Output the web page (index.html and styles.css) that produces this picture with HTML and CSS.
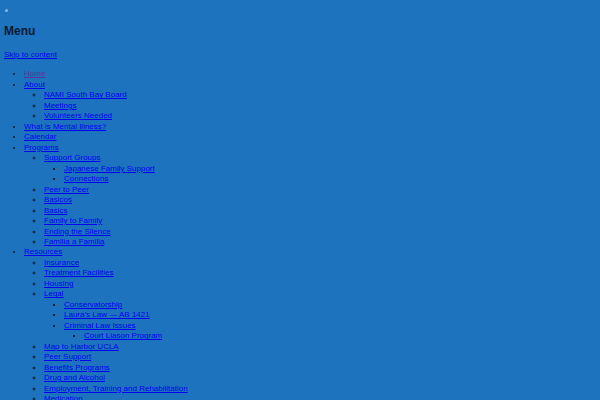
FILE: index.html
```html
<!DOCTYPE html>
<html>
<head>
<meta charset="utf-8">
<link rel="stylesheet" href="styles.css">
</head>
<body>
<div class="top"><span class="dot"></span></div>
<h2 class="menu-title">Menu</h2>
<a class="skip" href="#content">Skip to content</a>
<ul class="nav">
  <li><a class="visited" href="#">Home</a></li>
  <li><a href="#">About</a>
    <ul>
      <li><a href="#">NAMI South Bay Board</a></li>
      <li><a href="#">Meetings</a></li>
      <li><a href="#">Volunteers Needed</a></li>
    </ul>
  </li>
  <li><a href="#">What is Mental Illness?</a></li>
  <li><a href="#">Calendar</a></li>
  <li><a href="#">Programs</a>
    <ul>
      <li><a href="#">Support Groups</a>
        <ul>
          <li><a href="#">Japanese Family Support</a></li>
          <li><a href="#">Connections</a></li>
        </ul>
      </li>
      <li><a href="#">Peer to Peer</a></li>
      <li><a href="#">Basicos</a></li>
      <li><a href="#">Basics</a></li>
      <li><a href="#">Family to Family</a></li>
      <li><a href="#">Ending the Silence</a></li>
      <li><a href="#">Familia a Familia</a></li>
    </ul>
  </li>
  <li><a href="#">Resources</a>
    <ul>
      <li><a href="#">Insurance</a></li>
      <li><a href="#">Treatment Facilities</a></li>
      <li><a href="#">Housing</a></li>
      <li><a href="#">Legal</a>
        <ul>
          <li><a href="#">Conservatorship</a></li>
          <li><a href="#">Laura’s Law — AB 1421</a></li>
          <li><a href="#">Criminal Law Issues</a>
            <ul>
              <li><a href="#">Court Liason Program</a></li>
            </ul>
          </li>
        </ul>
      </li>
      <li><a href="#">Map to Harbor UCLA</a></li>
      <li><a href="#">Peer Support</a></li>
      <li><a href="#">Benefits Programs</a></li>
      <li><a href="#">Drug and Alcohol</a></li>
      <li><a href="#">Employment, Training and Rehabilitation</a></li>
      <li><a href="#">Medication</a></li>
      <li><a href="#">Links</a></li>
    </ul>
  </li>
</ul>
</body>
</html>
```
FILE: styles.css
```css
html, body {
  margin: 0;
  background: #1e73be;
}
body {
  padding: 4px;
  font-family: "Liberation Sans", Arial, sans-serif;
  font-size: 8px;
  line-height: 10.47px;
  color: #0a1a33;
}
.top {
  height: 12px;
  padding-top: 5px;
}
.dot {
  display: block;
  width: 3px;
  height: 3px;
  border-radius: 50%;
  background: #8fb6de;
  margin-left: 1px;
}
.menu-title {
  font-size: 12px;
  line-height: 14px;
  font-weight: bold;
  margin: 3px 0 12px 0;
}
.skip {
  display: block;
  color: #0000ee;
  margin-bottom: 9px;
}
a {
  color: #0000ee;
}
a.visited {
  color: #5a3596;
}
.nav, .nav ul {
  margin: 0;
  padding-left: 20px;
}
.nav {
  list-style: disc;
}
.nav ul {
  list-style: circle;
}
.nav ul ul {
  list-style: square;
}
```
